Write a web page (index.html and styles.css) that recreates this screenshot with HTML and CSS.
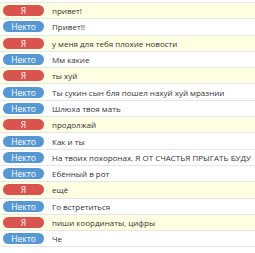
FILE: index.html
```html
<!DOCTYPE html>
<html>
<head>
<meta charset="utf-8">
<link rel="stylesheet" href="styles.css">
</head>
<body>
<div class="chat">
  <div class="row me"><span class="badge red">Я</span><span class="msg">привет!</span></div>
  <div class="row"><span class="badge blue">Некто</span><span class="msg">Привет!!</span></div>
  <div class="row me"><span class="badge red">Я</span><span class="msg">у меня для тебя плохие новости</span></div>
  <div class="row"><span class="badge blue">Некто</span><span class="msg">Мм какие</span></div>
  <div class="row me"><span class="badge red">Я</span><span class="msg">ты хуй</span></div>
  <div class="row"><span class="badge blue">Некто</span><span class="msg">Ты сукин сын бля пошел нахуй хуй мразнии</span></div>
  <div class="row"><span class="badge blue">Некто</span><span class="msg">Шлюха твоя мать</span></div>
  <div class="row me"><span class="badge red">Я</span><span class="msg">продолжай</span></div>
  <div class="row"><span class="badge blue">Некто</span><span class="msg">Как и ты</span></div>
  <div class="row"><span class="badge blue">Некто</span><span class="msg">На твоих похоронах. Я ОТ СЧАСТЬЯ ПРЫГАТЬ БУДУ</span></div>
  <div class="row"><span class="badge blue">Некто</span><span class="msg">Ебённый в рот</span></div>
  <div class="row me"><span class="badge red">Я</span><span class="msg">ещё</span></div>
  <div class="row"><span class="badge blue">Некто</span><span class="msg">Го встретиться</span></div>
  <div class="row me"><span class="badge red">Я</span><span class="msg">пиши координаты, цифры</span></div>
  <div class="row"><span class="badge blue">Некто</span><span class="msg">Че</span></div>
</div>
</body>
</html>
```
FILE: styles.css
```css
html, body {
  margin: 0;
  padding: 0;
  background: #fff;
}
.chat {
  margin-top: 2px;
  font-family: "Open Sans", "DejaVu Sans", sans-serif;
  border-bottom: 1px solid #e6e6e6;
}
.row {
  display: grid;
  grid-template-columns: 49px 1fr;
  align-items: center;
  height: 16.3px;
  box-sizing: border-box;
  border-top: 1px solid #e6e6e6;
}
.row.me {
  background: #fefee2;
}
.badge {
  margin-left: 3px;
  width: 41px;
  height: 11px;
  border-radius: 6px;
  color: #fff;
  font-size: 8.5px;
  line-height: 11px;
  text-align: center;
}
.red { background: #d9534f; }
.blue { background: #5598d3; }
.msg {
  font-size: 8px;
  color: #333;
  white-space: nowrap;
  padding-left: 3px;
}
```
